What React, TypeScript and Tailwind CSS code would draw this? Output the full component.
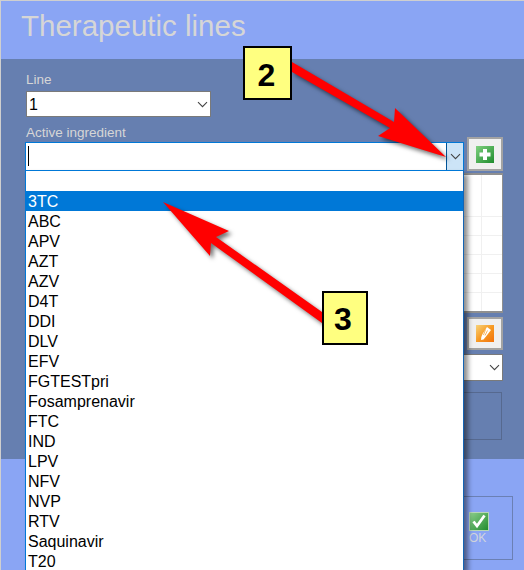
const sans = { fontFamily: '"Liberation Sans", Arial, sans-serif' };
const items = ['', '3TC', 'ABC', 'APV', 'AZT', 'AZV', 'D4T', 'DDI', 'DLV', 'EFV', 'FGTESTpri', 'Fosamprenavir', 'FTC', 'IND', 'LPV', 'NFV', 'NVP', 'RTV', 'Saquinavir', 'T20'];

function Chevron({ className = '' }: { className?: string }) {
  return (
    <svg width="11" height="7" viewBox="0 0 11 7" className={className}>
      <path d="M1 1.2 L5.5 5.7 L10 1.2" fill="none" stroke="#444" strokeWidth="1.1" />
    </svg>
  );
}

function Callout({ n, className }: { n: string; className: string }) {
  return (
    <div className={`absolute flex items-center justify-center bg-[#ffff80] border-2 border-black text-[32px] font-bold text-black ${className}`}>{n}</div>
  );
}

export default function App() {
  return (
    <div style={sans} className="relative w-[524px] h-[570px] overflow-hidden bg-[#cfcfcf] pt-px pl-px">
      <header className="h-[58px] bg-[#8aa5f4] pl-[20px] pt-[9px]">
        <h1 className="text-[29.5px] leading-[32px] text-[#d6d6d6]">Therapeutic lines</h1>
      </header>

      <main className="h-[400px] bg-[#667fb0] pl-[24px] pt-[13px]">
        <div className="w-[478px] flex flex-col">
          <label className="h-[19px] pl-px text-[13.5px] leading-[16px] text-[#d6d6d6]">Line</label>
          <div className="ml-px w-[185px] h-[26px] flex items-center justify-between bg-white border border-[#7a7a7a] pl-[2px] pr-[2px] text-[16px] text-black">
            <span className="pt-px">1</span>
            <Chevron />
          </div>
          <label className="mt-2 h-3 pl-px text-[13.5px] leading-[16px] text-[#d6d6d6]">Active ingredient</label>
          <div className="flex items-end h-[34px]">
            <div className="w-[439px] h-[29px] flex justify-between bg-white border border-[#0078d7]">
              <span className="mt-[3px] ml-[2px] w-px h-[20px] bg-black" />
              <span className="w-[17px] flex items-center justify-center bg-[#cce4f7] border-l border-[#005499]">
                <Chevron />
              </span>
            </div>
            <button className="ml-[3px] w-[36px] h-[34px] flex items-center justify-center bg-[#f0f0f0] border-2 border-[#a3a3a3]">
              <svg width="18" height="17" viewBox="0 0 18 17">
                <defs>
                  <linearGradient id="g" x1="0" y1="0" x2="1" y2="1">
                    <stop offset="0" stopColor="#7fd07f" />
                    <stop offset="1" stopColor="#1e8c2e" />
                  </linearGradient>
                </defs>
                <rect width="18" height="17" fill="url(#g)" />
                <path d="M7 3h4v3.5h3.5v4H11V14H7v-3.5H3.5v-4H7z" fill="#fff" />
              </svg>
            </button>
          </div>

          <div className="relative mt-[2px] ml-px w-[477px] h-[140px] bg-white border-t-2 border-b-2 border-r border-[#8f8f8f] grid grid-rows-[42px_19px_19px_19px_19px_1fr] grid-cols-[456px_1fr]">
            {Array.from({ length: 12 }).map((_, i) => (
              <div key={i} className={`${i % 2 === 0 ? 'border-r' : ''} ${i < 10 ? 'border-b' : ''} border-[#f0f0f0]`} />
            ))}
          </div>

          <button className="mt-[4px] self-end w-[36px] h-[33px] flex items-center justify-center bg-[#f0f0f0] border-2 border-[#a3a3a3]">
            <svg width="18" height="17" viewBox="0 0 18 17">
              <defs>
                <linearGradient id="o" x1="0" y1="0" x2="1" y2="1">
                  <stop offset="0" stopColor="#f7d37a" />
                  <stop offset="0.5" stopColor="#f79a24" />
                  <stop offset="1" stopColor="#f2720c" />
                </linearGradient>
              </defs>
              <rect width="18" height="17" fill="url(#o)" />
              <path d="M11 2 L15 5 L10 11.5 L7.5 14.5 L5 15 L5.3 12 L6.5 9 Z" fill="#fff" />
              <path d="M9.5 4.5 L7.5 10 M11.5 5.5 L9 10.5" stroke="#f5a33a" strokeWidth="0.8" fill="none" />
            </svg>
          </button>

          <div className="mt-[4px] ml-px w-[477px] h-[27px] flex items-center justify-end bg-white border border-[#7a7a7a] pr-[2px]">
            <Chevron />
          </div>

          <div className="mt-[11px] ml-px w-[476px] h-[48px] border border-[#56698f]" />
        </div>
      </main>

      <footer className="h-[111px] bg-[#8aa5f4] pt-[37px] flex justify-end pr-[11px]">
        <div className="w-[400px] h-[64px] border border-[#6b80b4] pl-[355px] pt-[15px]">
          <svg width="20" height="19" viewBox="0 0 20 19" className="block">
            <defs>
              <linearGradient id="k" x1="0" y1="0" x2="1" y2="1">
                <stop offset="0" stopColor="#8ed08e" />
                <stop offset="1" stopColor="#1f8a2d" />
              </linearGradient>
            </defs>
            <rect x="0.5" y="0.5" width="19" height="18" fill="url(#k)" stroke="#b8d8b8" />
            <path d="M4.5 9.5 L8 14 L15.5 3.5" fill="none" stroke="#fff" strokeWidth="2.8" />
          </svg>
          <div className="mt-px text-[12px] leading-[13px] text-[#d0d4dc]">OK</div>
        </div>
      </footer>

      <ul className="absolute left-[25px] top-[170px] w-[439px] h-[400px] bg-white border-t border-x border-t-[#0078d7] border-l-[#0078d7] border-r-[#1464b4] shadow-[4px_4px_5px_rgba(0,0,0,0.45)] text-[16px] leading-[20px] text-black">
        {items.map((it, i) => (
          <li key={i} className={`h-[20px] pl-[2px] pt-px ${it === '3TC' ? 'bg-[#0078d7] text-white' : ''}`}>{it}</li>
        ))}
      </ul>

      <svg width="524" height="570" viewBox="0 0 524 570" className="absolute left-0 top-0 pointer-events-none drop-shadow-[3px_3px_2px_rgba(0,0,0,0.55)]">
        <polygon points="292,62 394,122 395,108 446,157 378,136 390,128 292,72" fill="#ff0000" />
        <polygon points="322,312 216,237 229,231 163,202 210,256 211,243 322,323" fill="#ff0000" />
      </svg>

      <Callout n="2" className="left-[243px] top-[46px] w-[49px] h-[54px] pr-[2px] pt-[3px]" />
      <Callout n="3" className="left-[322px] top-[291px] w-[46px] h-[54px] pr-[4px] pt-[2px]" />
    </div>
  );
}
